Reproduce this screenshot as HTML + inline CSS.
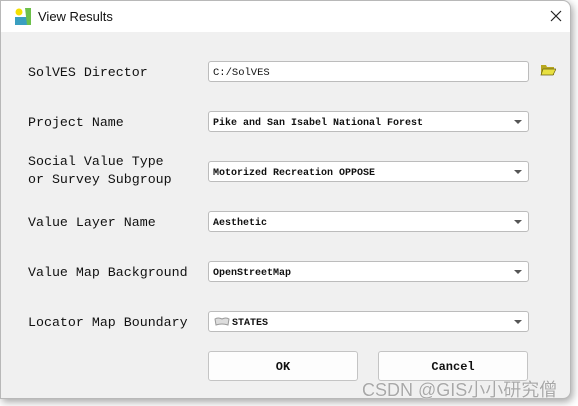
<!DOCTYPE html>
<html><head><style>
body{margin:0;width:578px;height:406px;background:#fff;position:relative;overflow:hidden;font-family:"Liberation Mono",monospace}
.win{position:absolute;left:0;top:0;width:569px;height:397px;background:#f0f0f0;border:1px solid #b8b8b8;border-radius:0 8px 8px 0;box-shadow:2px 3px 8px rgba(0,0,0,.35)}
.tb{position:absolute;left:0;top:0;width:569px;height:31px;background:#fff;border-radius:0 8px 0 0}
.title{position:absolute;left:37px;top:8px;font:13px "Liberation Sans",sans-serif;color:#111}
.lbl{position:absolute;left:28px;font-size:13.3px;color:#111;line-height:18px}
.f{position:absolute;left:208px;width:319px;height:19px;background:#fff;border:1px solid #bcbcbc;border-radius:3px;font-size:10px;line-height:19px;color:#111;font-weight:bold;box-sizing:content-box}
.f span{margin-left:4px;position:relative;top:2px}
.f:after{content:"";position:absolute;right:6px;top:8px;border:4px solid transparent;border-top:4px solid #555;border-bottom:0}
.f.np:after{display:none}
.b{position:absolute;top:351px;width:148px;height:28px;background:#fdfdfd;border:1px solid #c4c4c4;border-radius:3px;text-align:center;line-height:30px;font-size:12px;font-weight:bold;color:#111}
.wm{position:absolute;left:362px;top:376px;font:18px "Liberation Sans","Noto Sans CJK SC",sans-serif;color:#a8a8a8;text-shadow:0 0 1px #fff,0 0 1px #fff}
</style></head><body>
<div class="win">
<div class="tb">
<svg style="position:absolute;left:14px;top:7px" width="18" height="17"><rect x="0" y="9" width="16" height="8" fill="#3a9fc0"/><path d="M10 0 L16 0 L16 17 L12 17Z" fill="#6cc04a"/><circle cx="4" cy="4" r="3.5" fill="#f4e000"/></svg>
<div class="title">View Results</div>
<svg style="position:absolute;left:549px;top:9px" width="12" height="12"><path d="M1 1L11 11M11 1L1 11" stroke="#222" stroke-width="1.2"/></svg>
</div>
</div>
<div class="lbl" style="top:64px">SolVES Director</div>
<div class="f np" style="top:61px;font-weight:normal;font-size:10.5px"><span>C:/SolVES</span></div>
<svg style="position:absolute;left:540px;top:62px" width="16" height="14"><path d="M1 3h5l1 2h7v8H1z" fill="#b8a820"/><path d="M3 7h13l-3 6H1z" fill="#e8e040" stroke="#6a6010" stroke-width=".7"/></svg>
<div class="lbl" style="top:114px">Project Name</div>
<div class="f" style="top:111px"><span>Pike and San Isabel National Forest</span></div>
<div class="lbl" style="top:153px">Social Value Type<br>or Survey Subgroup</div>
<div class="f" style="top:161px"><span>Motorized Recreation OPPOSE</span></div>
<div class="lbl" style="top:214px">Value Layer Name</div>
<div class="f" style="top:211px"><span>Aesthetic</span></div>
<div class="lbl" style="top:264px">Value Map Background</div>
<div class="f" style="top:261px"><span>OpenStreetMap</span></div>
<div class="lbl" style="top:314px">Locator Map Boundary</div>
<div class="f" style="top:311px"><svg style="position:absolute;left:5px;top:5px" width="16" height="9"><path d="M1 2 Q4 0 8 2 Q12 0 15 2 L14 8 Q8 6 2 8Z" fill="#ddd" stroke="#999"/></svg><span style="margin-left:23px">STATES</span></div>
<div class="b" style="left:208px">OK</div>
<div class="b" style="left:378px">Cancel</div>
<div class="wm">CSDN @GIS小小研究僧</div>
</body></html>
